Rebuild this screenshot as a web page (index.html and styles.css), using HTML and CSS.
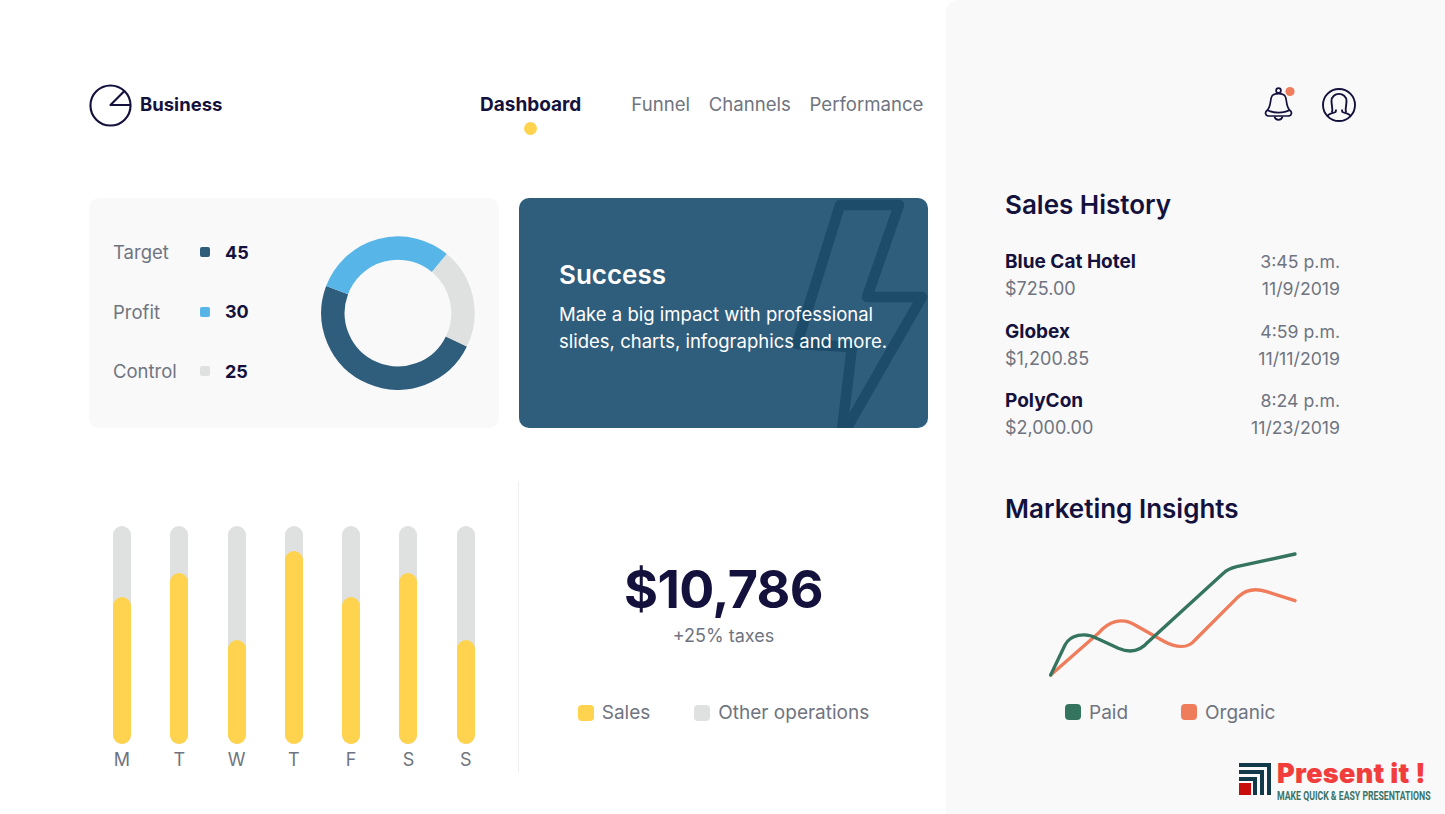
FILE: index.html
```html
<!DOCTYPE html>
<html lang="en">
<head>
    <meta charset="UTF-8">
    <title>Business Dashboard</title>
    <link rel="stylesheet" href="styles.css">
</head>
<body>
    <main class="main">
        <header class="topbar">
            <div class="brand">
                <svg class="brand-icon" viewBox="0 0 44 44" fill="none" stroke="#14123d" stroke-width="2.2">
                    <circle cx="22" cy="22" r="20.5"/>
                    <path d="M22 21.5H42M22 21.5L36 7.5" stroke-linecap="round"/>
                </svg>
                <span>Business</span>
            </div>
            <nav class="nav">
                <a class="nav-link active">Dashboard</a>
                <a class="nav-link">Funnel</a>
                <a class="nav-link">Channels</a>
                <a class="nav-link">Performance</a>
            </nav>
        </header>

        <section class="cards">
            <div class="card stats-card">
                <ul class="stats">
                    <li><span class="stat-name">Target</span><i class="dot dark"></i><b>45</b></li>
                    <li><span class="stat-name">Profit</span><i class="dot blue"></i><b>30</b></li>
                    <li><span class="stat-name">Control</span><i class="dot grey"></i><b>25</b></li>
                </ul>
                <svg class="donut" viewBox="0 0 154 154" fill="none" stroke-width="23.4">
                    <path d="M135.4 105.5A65 65 0 0 1 16.1 54.2" stroke="#2f5d7c"/>
                    <path d="M16.1 54.2A65 65 0 0 1 118.4 27" stroke="#57b5e7"/>
                    <path d="M118.4 27A65 65 0 0 1 135.4 105.5" stroke="#dfe0e0"/>
                </svg>
            </div>
            <div class="card success-card">
                <svg class="bolt" viewBox="0 0 410 230" fill="none" stroke="#1d4b6a" stroke-width="10.500" stroke-linejoin="round">
                    <path d="M321 7H380L348 99H403L322 240L333 149L278 146Z"/>
                </svg>
                <h2>Success</h2>
                <p>Make a big impact with professional slides, charts, infographics and more.</p>
            </div>
        </section>

        <section class="bottom">
            <div class="bars">
                <div class="bar-col"><div class="bar"><div class="bar-fill" style="height: 147px"></div></div><span>M</span></div>
                <div class="bar-col"><div class="bar"><div class="bar-fill" style="height: 171px"></div></div><span>T</span></div>
                <div class="bar-col"><div class="bar"><div class="bar-fill" style="height: 104px"></div></div><span>W</span></div>
                <div class="bar-col"><div class="bar"><div class="bar-fill" style="height: 193px"></div></div><span>T</span></div>
                <div class="bar-col"><div class="bar"><div class="bar-fill" style="height: 147px"></div></div><span>F</span></div>
                <div class="bar-col"><div class="bar"><div class="bar-fill" style="height: 171px"></div></div><span>S</span></div>
                <div class="bar-col"><div class="bar"><div class="bar-fill" style="height: 104px"></div></div><span>S</span></div>
            </div>
            <div class="total">
                <div class="amount">$10,786</div>
                <div class="taxes">+25% taxes</div>
                <div class="legend total-legend">
                    <span class="legend-item"><i class="swatch yellow"></i>Sales</span>
                    <span class="legend-item"><i class="swatch light"></i>Other operations</span>
                </div>
            </div>
        </section>
    </main>

    <aside class="side">
        <div class="side-icons">
            <svg class="bell" viewBox="0 0 32 44" fill="none" stroke="#14123d" stroke-width="1.7" stroke-linejoin="round">
                <circle cx="15.5" cy="6.500" r="2.400"/>
                <path d="M4.500 26C8 22 7 17 8.500 13C10 8.500 21 8.500 22.500 13C24 17 23 22 26.500 26"/>
                <path d="M4.500 26C1 28.500 2.500 32 6.500 32H24.500C28.500 32 30 28.500 26.500 26C21 29.500 10 29.500 4.500 26Z"/>
                <path d="M11.500 32.500C12.500 37 18.500 37 19.500 32.500"/>
                <circle cx="27" cy="7.500" r="4.600" fill="#ef7d5b" stroke="none"/>
            </svg>
            <svg class="user" viewBox="0 0 36 36" fill="none" stroke="#14123d" stroke-width="1.9" stroke-linejoin="round">
                <circle cx="18" cy="18" r="16"/>
                <path d="M10.500 25.500C12.500 24 10.500 19 10.500 14C10.500 4.500 25.500 4.500 25.500 14C25.500 19 23.500 24 25.500 25.500"/>
                <path d="M6.500 29.500C7 26.500 12 26.500 14.500 25C15 24.500 15 23.500 15 22.500M29.500 29.500C29 26.500 24 26.500 21.500 25C21 24.500 21 23.500 21 22.500"/>
            </svg>
        </div>

        <h2 class="side-title">Sales History</h2>
        <ul class="history">
            <li><b>Blue Cat Hotel</b><span>3:45 p.m.</span><span>$725.00</span><span>11/9/2019</span></li>
            <li><b>Globex</b><span>4:59 p.m.</span><span>$1,200.85</span><span>11/11/2019</span></li>
            <li><b>PolyCon</b><span>8:24 p.m.</span><span>$2,000.00</span><span>11/23/2019</span></li>
        </ul>

        <h2 class="side-title insights">Marketing Insights</h2>
        <svg class="line-chart" viewBox="0 0 840 420" fill="none" stroke-width="10" stroke-linecap="round" stroke-linejoin="round">
            <path d="M62 405L205 280C235 245 275 230 315 255L400 303C440 325 475 325 495 300L625 170C650 147 680 145 710 155L795 182" stroke="#ef7d5b"/>
            <path d="M62 405L105 315C120 285 165 275 200 295L265 325C300 340 330 335 355 305L580 100C590 90 600 85 620 80L795 42" stroke="#357560"/>
        </svg>
        <div class="legend side-legend">
            <span class="legend-item"><i class="swatch green"></i>Paid</span>
            <span class="legend-item"><i class="swatch orange"></i>Organic</span>
        </div>

        <div class="logo">
            <svg class="logo-mark" viewBox="0 0 32 32">
                <path d="M0 0H32V32H28V4H0ZM0 7H25V32H21V11H0ZM0 14H18V32H14V18H0Z" fill="#12394a"/>
                <rect x="0" y="20" width="12" height="12" fill="#c90d0d"/>
            </svg>
            <div class="logo-text">
                <div class="logo-name">Present it !</div>
                <div class="logo-tag">MAKE QUICK &amp; EASY PRESENTATIONS</div>
            </div>
        </div>
    </aside>
</body>
</html>
```

FILE: styles.css
```css
* {
    box-sizing: border-box;
}
body {
    margin: 0;
    height: 814px;
    overflow: hidden;
    display: flex;
    background-color: #fff;
    color: #14123d;
    font-family: 'Inter', 'Liberation Sans', sans-serif;
}
ul {
    list-style: none;
    margin: 0;
    padding: 0;
}
.main {
    width: 946px;
    padding: 84px 18px 0 89px;
}
.topbar {
    display: flex;
    height: 114px;
}
.brand {
    display: flex;
    flex: none;
    align-items: flex-start;
    gap: 8px;
    width: 391px;
    font-size: 18.500px;
    font-weight: 700;
    line-height: 40px;
}
.brand-icon {
    width: 43px;
    height: 43px;
}
.nav {
    display: flex;
    font-size: 18.600px;
    color: #6f7480;
    line-height: 41px;
}
.nav-link {
    margin-right: 18.700px;
}
.nav-link:last-child {
    margin-right: 0;
}
.nav-link.active {
    position: relative;
    margin-right: 50px;
    font-size: 19px;
    font-weight: 700;
    color: #14123d;
}
.nav-link.active::after {
    content: "";
    position: absolute;
    left: 44px;
    top: 38px;
    width: 13px;
    height: 13px;
    border-radius: 50%;
    background-color: #ffd34e;
}
.cards {
    display: grid;
    grid-template-columns: 410px 409px;
    gap: 20px;
    height: 230px;
}
.card {
    border-radius: 10px;
}
.stats-card {
    display: flex;
    align-items: center;
    padding-left: 24px;
    background-color: #f9f9fa;
}
.stats {
    display: flex;
    flex-direction: column;
    gap: 32.500px;
    width: 208px;
    padding-bottom: 3px;
}
.stats li {
    display: flex;
    align-items: center;
    height: 27px;
    font-size: 18.500px;
    color: #6f7480;
}
.stat-name {
    width: 87px;
}
.stats b {
    font-size: 18px;
    color: #14123d;
}
.dot {
    width: 10px;
    height: 10px;
    margin-right: 15px;
    border-radius: 2px;
}
.dot.dark {
    background-color: #2f5d7c;
}
.dot.blue {
    background-color: #57b5e7;
}
.dot.grey {
    background-color: #dfe0e0;
}
.donut {
    width: 154px;
    height: 154px;
}
.success-card {
    position: relative;
    overflow: hidden;
    padding: 62px 20px 0 40px;
    background-color: #2f5d7c;
    color: #fff;
}
.bolt {
    position: absolute;
    left: 0;
    top: 0;
    width: 410px;
    height: 230px;
}
.success-card h2 {
    position: relative;
    margin: 0 0 11px;
    font-size: 26px;
    font-weight: 600;
    line-height: 30px;
}
.success-card p {
    position: relative;
    width: 340px;
    margin: 0;
    font-size: 18.500px;
    line-height: 27px;
}
.bottom {
    display: flex;
    height: 290px;
    margin-top: 54px;
}
.bars {
    display: flex;
    gap: 39.300px;
    width: 430px;
    padding: 44px 0 0 24px;
    border-right: 1px solid #eeeff0;
}
.bar-col {
    display: flex;
    flex-direction: column;
    align-items: center;
    width: 18px;
    font-size: 18px;
    color: #6f7480;
}
.bar {
    position: relative;
    flex: none;
    width: 18px;
    height: 218px;
    margin-bottom: 5px;
    border-radius: 9px;
    background-color: #dfe0e0;
}
.bar-fill {
    position: absolute;
    left: 0;
    right: 0;
    bottom: 0;
    border-radius: 9px;
    background-color: #ffd34e;
}
.total {
    display: flex;
    flex-direction: column;
    align-items: center;
    width: 409px;
    padding-top: 73px;
}
.amount {
    font-size: 52px;
    font-weight: 700;
    line-height: 70px;
    letter-spacing: -0.600px;
}
.taxes {
    font-size: 18px;
    line-height: 22px;
    color: #6f7480;
}
.legend {
    display: flex;
    font-size: 19px;
    color: #6f7480;
}
.legend-item {
    display: flex;
    align-items: center;
    gap: 8px;
}
.total-legend {
    gap: 44px;
    margin-top: 54px;
}
.swatch {
    width: 16px;
    height: 16px;
    border-radius: 4px;
}
.swatch.yellow {
    background-color: #ffd34e;
}
.swatch.light {
    background-color: #dfe0e0;
}
.swatch.green {
    background-color: #357560;
}
.swatch.orange {
    background-color: #ef7d5b;
}
.side {
    position: relative;
    flex: 1;
    padding: 84px 105px 0 59px;
    border-top-left-radius: 12px;
    background-color: #f9f9fa;
}
.side-icons {
    display: flex;
    justify-content: flex-end;
    align-items: flex-start;
    gap: 26px;
    height: 101px;
    margin-right: -17px;
}
.bell {
    width: 32px;
    height: 44px;
}
.user {
    width: 36px;
    height: 36px;
    margin-top: 3px;
}
.side-title {
    margin: 0;
    font-size: 26px;
    font-weight: 600;
    line-height: 40px;
}
.history {
    margin-top: 23px;
}
.history li {
    display: grid;
    grid-template-columns: 1fr auto;
    align-content: start;
    height: 69.500px;
    font-size: 18px;
    line-height: 27px;
    color: #6f7480;
}
.history b {
    font-size: 19px;
    color: #14123d;
}
.history li span {
    font-size: 17.700px;
    text-align: right;
}
.history li span:nth-child(3) {
    font-size: 18px;
    text-align: left;
}
.insights {
    margin-top: 32px;
}
.line-chart {
    display: block;
    width: 280px;
    height: 140px;
    margin: 11px 0 0 25px;
}
.side-legend {
    gap: 53px;
    margin: 21px 0 0 60px;
}
.logo {
    position: absolute;
    right: 13px;
    bottom: 11px;
    display: flex;
    align-items: flex-start;
    gap: 6px;
}
.logo-mark {
    width: 32px;
    height: 32px;
    margin-top: 3px;
}
.logo-text {
    width: 155px;
}
.logo-name {
    font-size: 27px;
    font-weight: 900;
    line-height: 28px;
    letter-spacing: 0.300px;
    white-space: nowrap;
    color: #f23d3d;
}
.logo-tag {
    margin-top: 1px;
    font-family: 'Roboto', sans-serif;
    font-size: 13px;
    font-weight: 700;
    line-height: 14px;
    white-space: nowrap;
    color: #3a7468;
    transform: scaleX(0.67);
    transform-origin: left;
}
```
